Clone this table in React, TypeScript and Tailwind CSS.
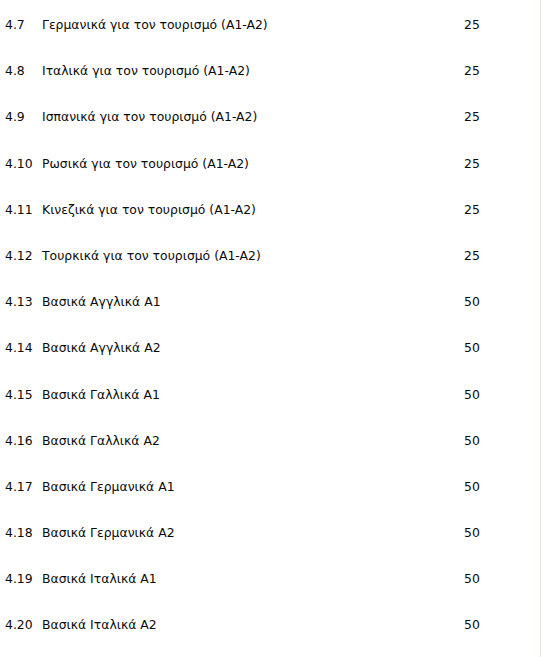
const rows: [string, string, string][] = [
  ["4.7", "Γερμανικά για τον τουρισμό (A1-A2)", "25"],
  ["4.8", "Ιταλικά για τον τουρισμό (A1-A2)", "25"],
  ["4.9", "Ισπανικά για τον τουρισμό (A1-A2)", "25"],
  ["4.10", "Ρωσικά για τον τουρισμό (A1-A2)", "25"],
  ["4.11", "Κινεζικά για τον τουρισμό (A1-A2)", "25"],
  ["4.12", "Τουρκικά για τον τουρισμό (A1-A2)", "25"],
  ["4.13", "Βασικά Αγγλικά Α1", "50"],
  ["4.14", "Βασικά Αγγλικά Α2", "50"],
  ["4.15", "Βασικά Γαλλικά Α1", "50"],
  ["4.16", "Βασικά Γαλλικά Α2", "50"],
  ["4.17", "Βασικά Γερμανικά Α1", "50"],
  ["4.18", "Βασικά Γερμανικά Α2", "50"],
  ["4.19", "Βασικά Ιταλικά Α1", "50"],
  ["4.20", "Βασικά Ιταλικά Α2", "50"],
];

export default function App() {
  return (
    <div className="w-[541px] h-[657px] bg-white flex overflow-hidden">
      <div
        className="w-[540px] pt-[2px] text-[12.4px] text-[#0a0a0a] leading-[46.2px]"
        style={{ fontFamily: '"DejaVu Sans", Verdana, sans-serif' }}
      >
        {rows.map(([n, name, v]) => (
          <div key={n} className="flex h-[46.2px]">
            <div className="w-[42px] pl-[5px]">{n}</div>
            <div className="w-[422px]">{name}</div>
            <div>{v}</div>
          </div>
        ))}
      </div>
      <div className="w-[1px] bg-[#ede4dc]" />
    </div>
  );
}
